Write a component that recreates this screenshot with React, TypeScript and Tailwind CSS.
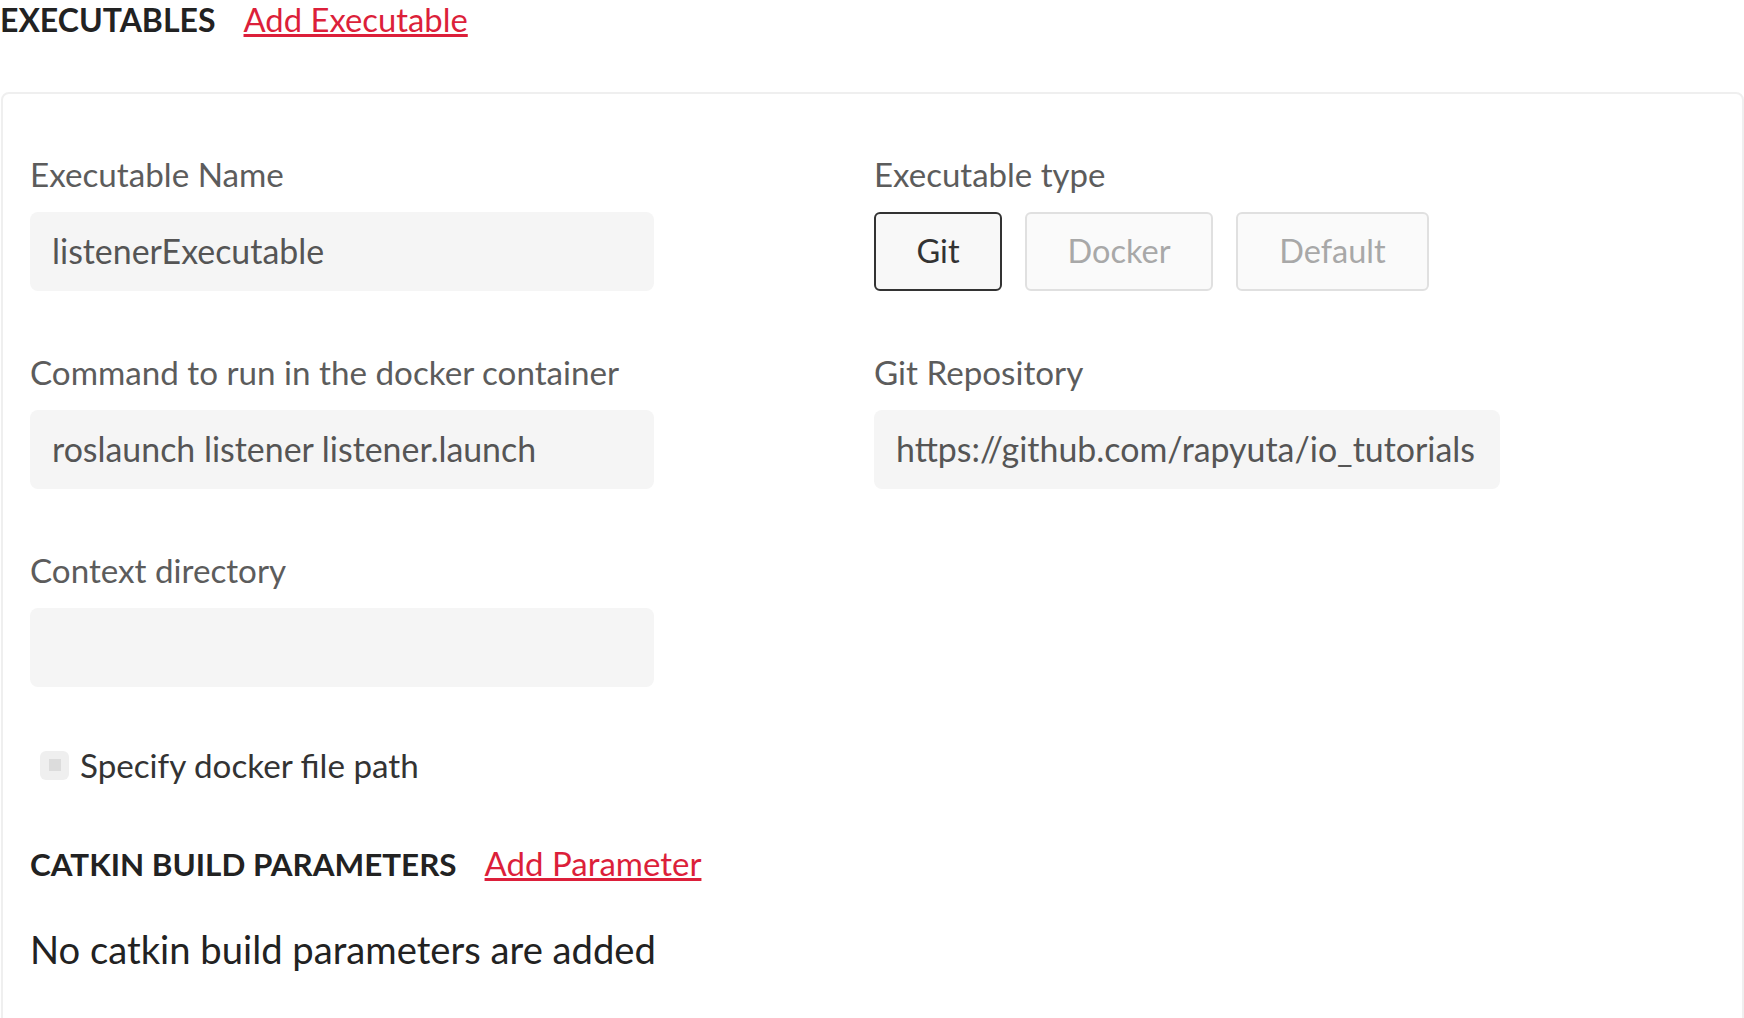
export default function App() {
  return (
    <div className="w-[1744px] h-[1018px] overflow-hidden bg-white font-['Lato',sans-serif]">
      <div className="flex items-baseline pt-px">
        <h2 className="font-bold text-[32px] leading-[38px] text-[#222]">EXECUTABLES</h2>
        <a className="ml-[28px] text-[32.8px] leading-[38px] text-[#dc1f3a] underline">
          Add Executable
        </a>
      </div>

      <div className="mt-[53px] ml-px h-[1000px] border-2 border-[#efefef] rounded-lg pl-[27px] pt-[62px]">
        <div className="flex">
          <div className="w-[624px] flex flex-col gap-[63px]">
            <Field label="Executable Name" value="listenerExecutable" />
            <Field label="Command to run in the docker container" value="roslaunch listener listener.launch" />
            <Field label="Context directory" value="" />
          </div>

          <div className="ml-[220px] w-[626px] flex flex-col gap-[63px]">
            <div>
              <p className="text-[33px] leading-[36px] text-[#5c5c5c] whitespace-nowrap">Executable type</p>
              <div className="mt-[20px] flex gap-[23px]">
                <button className="w-[128px] h-[79px] rounded-md border-2 border-[#333] bg-[#f8f8f8] text-[32.5px] text-[#333]">
                  Git
                </button>
                <button className="w-[188px] h-[79px] rounded-md border-2 border-[#e0e0e0] bg-[#fafafa] text-[32.5px] text-[#a8a8a8]">
                  Docker
                </button>
                <button className="w-[193px] h-[79px] rounded-md border-2 border-[#e0e0e0] bg-[#fafafa] text-[32.5px] text-[#a8a8a8]">
                  Default
                </button>
              </div>
            </div>
            <Field label="Git Repository" value="https://github.com/rapyuta/io_tutorials" />
          </div>
        </div>

        <label className="mt-[59px] ml-[10px] flex items-center gap-[11px]">
          <span className="w-[29px] h-[29px] rounded-md bg-[#efefef] flex items-center justify-center">
            <span className="w-[12px] h-[12px] bg-[#dcdcdc]" />
          </span>
          <span className="text-[33.2px] leading-[38px] text-[#333]">Specify docker file path</span>
        </label>

        <div className="mt-[60px] flex items-baseline">
          <h3 className="font-bold text-[31.4px] leading-[38px] text-[#222]">CATKIN BUILD PARAMETERS</h3>
          <a className="ml-[28px] text-[33px] leading-[38px] text-[#dc1f3a] underline">Add Parameter</a>
        </div>

        <p className="mt-[46px] text-[38.2px] leading-[40px] text-[#222]">No catkin build parameters are added</p>
      </div>
    </div>
  );
}

function Field({ label, value }: { label: string; value: string }) {
  return (
    <div>
      <p className="text-[33.2px] leading-[36px] text-[#5c5c5c] whitespace-nowrap">{label}</p>
      <div className="mt-[20px] h-[79px] rounded-lg bg-[#f5f5f5] flex items-center px-[22px]">
        <span className="text-[33.9px] text-[#555] whitespace-nowrap">{value}</span>
      </div>
    </div>
  );
}
